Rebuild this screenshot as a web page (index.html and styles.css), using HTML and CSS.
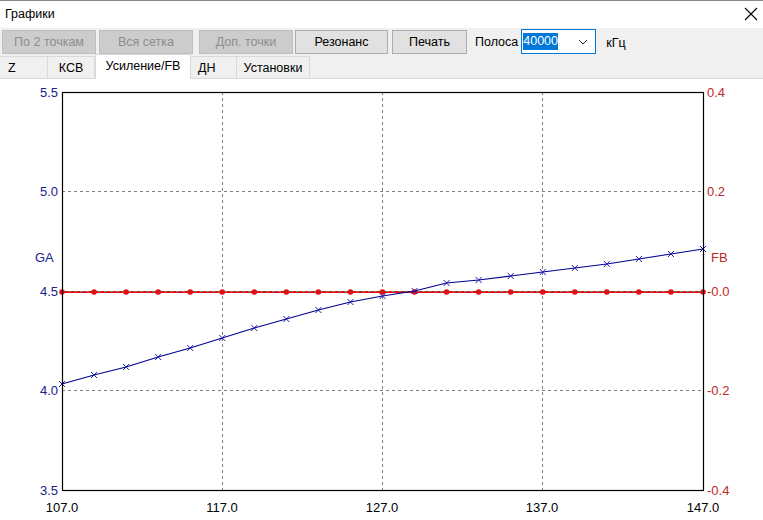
FILE: index.html
```html
<!DOCTYPE html>
<html lang="ru">
<head>
	<meta charset="UTF-8">
	<title>Графики</title>
	<link rel="stylesheet" href="styles.css">
</head>
<body>
<div id="window">
	<div class="titlebar">
		<span class="title">Графики</span>
		<svg class="close" width="14" height="14" viewBox="0 0 14 14">
			<path d="M1 1 L13 13 M13 1 L1 13" stroke="#000" stroke-width="1.1" fill="none"/>
		</svg>
	</div>
	<div class="toolbar">
		<button class="btn btn-off b1" disabled>По 2 точкам</button>
		<button class="btn btn-off b2" disabled>Вся сетка</button>
		<button class="btn btn-off b3" disabled>Доп. точки</button>
		<button class="btn b4">Резонанс</button>
		<button class="btn b5">Печать</button>
		<span class="label">Полоса</span>
		<div class="combo">
			<span class="sel">40000</span>
			<svg class="chev" width="10" height="6" viewBox="0 0 10 6">
				<path d="M1 1 L5 5 L9 1" stroke="#333" stroke-width="1" fill="none"/>
			</svg>
		</div>
		<span class="unit">кГц</span>
	</div>
	<ul class="tabs">
		<li class="tab t1">Z</li>
		<li class="tab t2">КСВ</li>
		<li class="tab t3 active">Усиление/FB</li>
		<li class="tab t4">ДН</li>
		<li class="tab t5">Установки</li>
	</ul>
	<div class="chart">
		<svg id="plot" width="763" height="441" viewBox="0 79 763 441"></svg>
	</div>
</div>
<script>
	window.onload = function () {
		let svg = document.getElementById('plot')
		let ns = 'http://www.w3.org/2000/svg'
		let left = 62, right = 703, top = 92, bottom = 490

		let ga = [384, 375, 367, 357, 348, 338, 328, 319, 310, 302, 296,
			291, 283, 280, 276, 272, 268, 264, 259, 254, 249]

		function add (tag, attrs, text) {
			let el = document.createElementNS(ns, tag)
			for (let k in attrs) {
				el.setAttribute(k, attrs[k])
			}
			if (text) el.textContent = text
			svg.appendChild(el)
			return el
		}

		function xAt (i) {
			return left + (right - left) * i / 20
		}

		// сетка
		let hLines = [191, 291, 390]
		for (let i = 0; i < hLines.length; i++) {
			add('line', {x1: left, y1: hLines[i] + .5, x2: right, y2: hLines[i] + .5, class: 'grid'})
		}
		let vLines = [222, 382, 542]
		for (let i = 0; i < vLines.length; i++) {
			add('line', {x1: vLines[i] + .5, y1: top, x2: vLines[i] + .5, y2: bottom, class: 'grid'})
		}

		// FB
		add('line', {x1: left, y1: 292, x2: right, y2: 292, class: 'fb'})
		add('line', {x1: left, y1: 291.5, x2: right, y2: 291.5, class: 'grid'})
		for (let i = 0; i < 21; i++) {
			add('circle', {cx: xAt(i), cy: 292, r: 2.8, class: 'dot'})
		}

		// GA
		let pts = ga.map(function (y, i) { return xAt(i) + ',' + y }).join(' ')
		add('polyline', {points: pts, class: 'ga'})
		for (let i = 0; i < 21; i++) {
			let x = xAt(i), y = ga[i]
			add('path', {d: 'M' + (x - 3) + ' ' + (y - 3) + ' L' + (x + 3) + ' ' + (y + 3) +
				' M' + (x + 3) + ' ' + (y - 3) + ' L' + (x - 3) + ' ' + (y + 3), class: 'mark'})
		}

		// рамка
		add('rect', {x: left + .5, y: top + .5, width: right - left, height: bottom - top, class: 'frame'})

		// подписи
		let yl = [['5.5', 92], ['5.0', 191], ['4.5', 291], ['4.0', 390], ['3.5', 490]]
		for (let i = 0; i < yl.length; i++) {
			add('text', {x: 58, y: yl[i][1] + 5, class: 'lbl-l'}, yl[i][0])
		}
		let yr = [['0.4', 92], ['0.2', 191], ['-0.0', 291], ['-0.2', 390], ['-0.4', 490]]
		for (let i = 0; i < yr.length; i++) {
			add('text', {x: 707, y: yr[i][1] + 5, class: 'lbl-r'}, yr[i][0])
		}
		let xl = [['107.0', 62], ['117.0', 222], ['127.0', 382], ['137.0', 542], ['147.0', 703]]
		for (let i = 0; i < xl.length; i++) {
			add('text', {x: xl[i][1], y: 512, class: 'lbl-b'}, xl[i][0])
		}
		add('text', {x: 35, y: 262, class: 'name-l'}, 'GA')
		add('text', {x: 711, y: 262, class: 'name-r'}, 'FB')
	}
</script>
</body>
</html>
```

FILE: styles.css
```css
* {
	padding: 0;
	margin: 0;
	box-sizing: border-box;
}

body {
	width: 763px;
	height: 520px;
	overflow: hidden;
	font-family: "Liberation Sans", Arial, sans-serif;
	font-size: 12.5px;
	color: #000;
	background-color: #fff;
}

li {
	list-style: none;
}

.titlebar {
	height: 28px;
	border-top: 1px solid #8a8a8a;
	background-color: #fff;
	display: flex;
	align-items: center;
	justify-content: space-between;
	padding: 0 5px 0 5px;
}

.title {
	font-size: 12.5px;
	margin-top: -1px;
}

.close {
	margin-top: -1px;
}

.toolbar {
	height: 27px;
	background-color: #f0f0f0;
	display: flex;
	align-items: center;
	padding-left: 2px;
}

.btn {
	height: 24px;
	font-family: inherit;
	font-size: 12.5px;
	background-color: #e1e1e1;
	border: 1px solid #adadad;
	color: #000;
}

.btn-off {
	background-color: #cccccc;
	border-color: #bfbfbf;
	color: #8c8c8c;
}

.b1 { width: 94px; }
.b2 { width: 94px; margin-left: 3px; }
.b3 { width: 94px; margin-left: 6px; }
.b4 { width: 93px; margin-left: 2px; }
.b5 { width: 75px; margin-left: 4px; }

.label {
	margin-left: 8px;
}

.combo {
	width: 75px;
	height: 25px;
	margin-left: 3px;
	background-color: #fff;
	border: 1px solid #0078d7;
	display: flex;
	align-items: center;
	justify-content: space-between;
	padding: 0 7px 0 1px;
}

.sel {
	background-color: #0078d7;
	color: #fff;
	padding: 1px 0;
	line-height: 15px;
}

.unit {
	margin-left: 10px;
	margin-top: 2px;
}

.tabs {
	height: 24px;
	background-color: #f0f0f0;
	display: flex;
	align-items: flex-end;
	border-bottom: 1px solid #d9d9d9;
}

.tab {
	height: 22px;
	border: 1px solid #d9d9d9;
	border-bottom: none;
	border-left: none;
	display: flex;
	align-items: center;
	justify-content: center;
	background-color: #f0f0f0;
}

.t1 { width: 48px; justify-content: flex-start; padding-left: 8px; }
.t2 { width: 47px; }
.t3 { width: 96px; }
.t4 { width: 46px; justify-content: flex-start; padding-left: 7px; }
.t5 { width: 73px; }

.tab.active {
	height: 25px;
	background-color: #fff;
	border-left: 1px solid #d9d9d9;
	margin-bottom: -1px;
	padding-bottom: 3px;
}

.chart {
	height: 441px;
	background-color: #fff;
}

#plot {
	display: block;
	font-family: "Liberation Sans", Arial, sans-serif;
	font-size: 13px;
}

.grid {
	stroke: #808080;
	stroke-width: 1;
	stroke-dasharray: 3 3;
}

.frame {
	fill: none;
	stroke: #000;
	stroke-width: 1.2;
}

.fb {
	stroke: #e01010;
	stroke-width: 2;
}

.dot {
	fill: #e01010;
}

.ga {
	fill: none;
	stroke: #000090;
	stroke-width: 1.1;
}

.mark {
	stroke: #1a1ab0;
	stroke-width: 1;
	fill: none;
}

.lbl-l {
	fill: #202090;
	text-anchor: end;
}

.lbl-r {
	fill: #c02828;
}

.lbl-b {
	fill: #000;
	text-anchor: middle;
}

.name-l {
	fill: #202090;
}

.name-r {
	fill: #c02828;
}
```
